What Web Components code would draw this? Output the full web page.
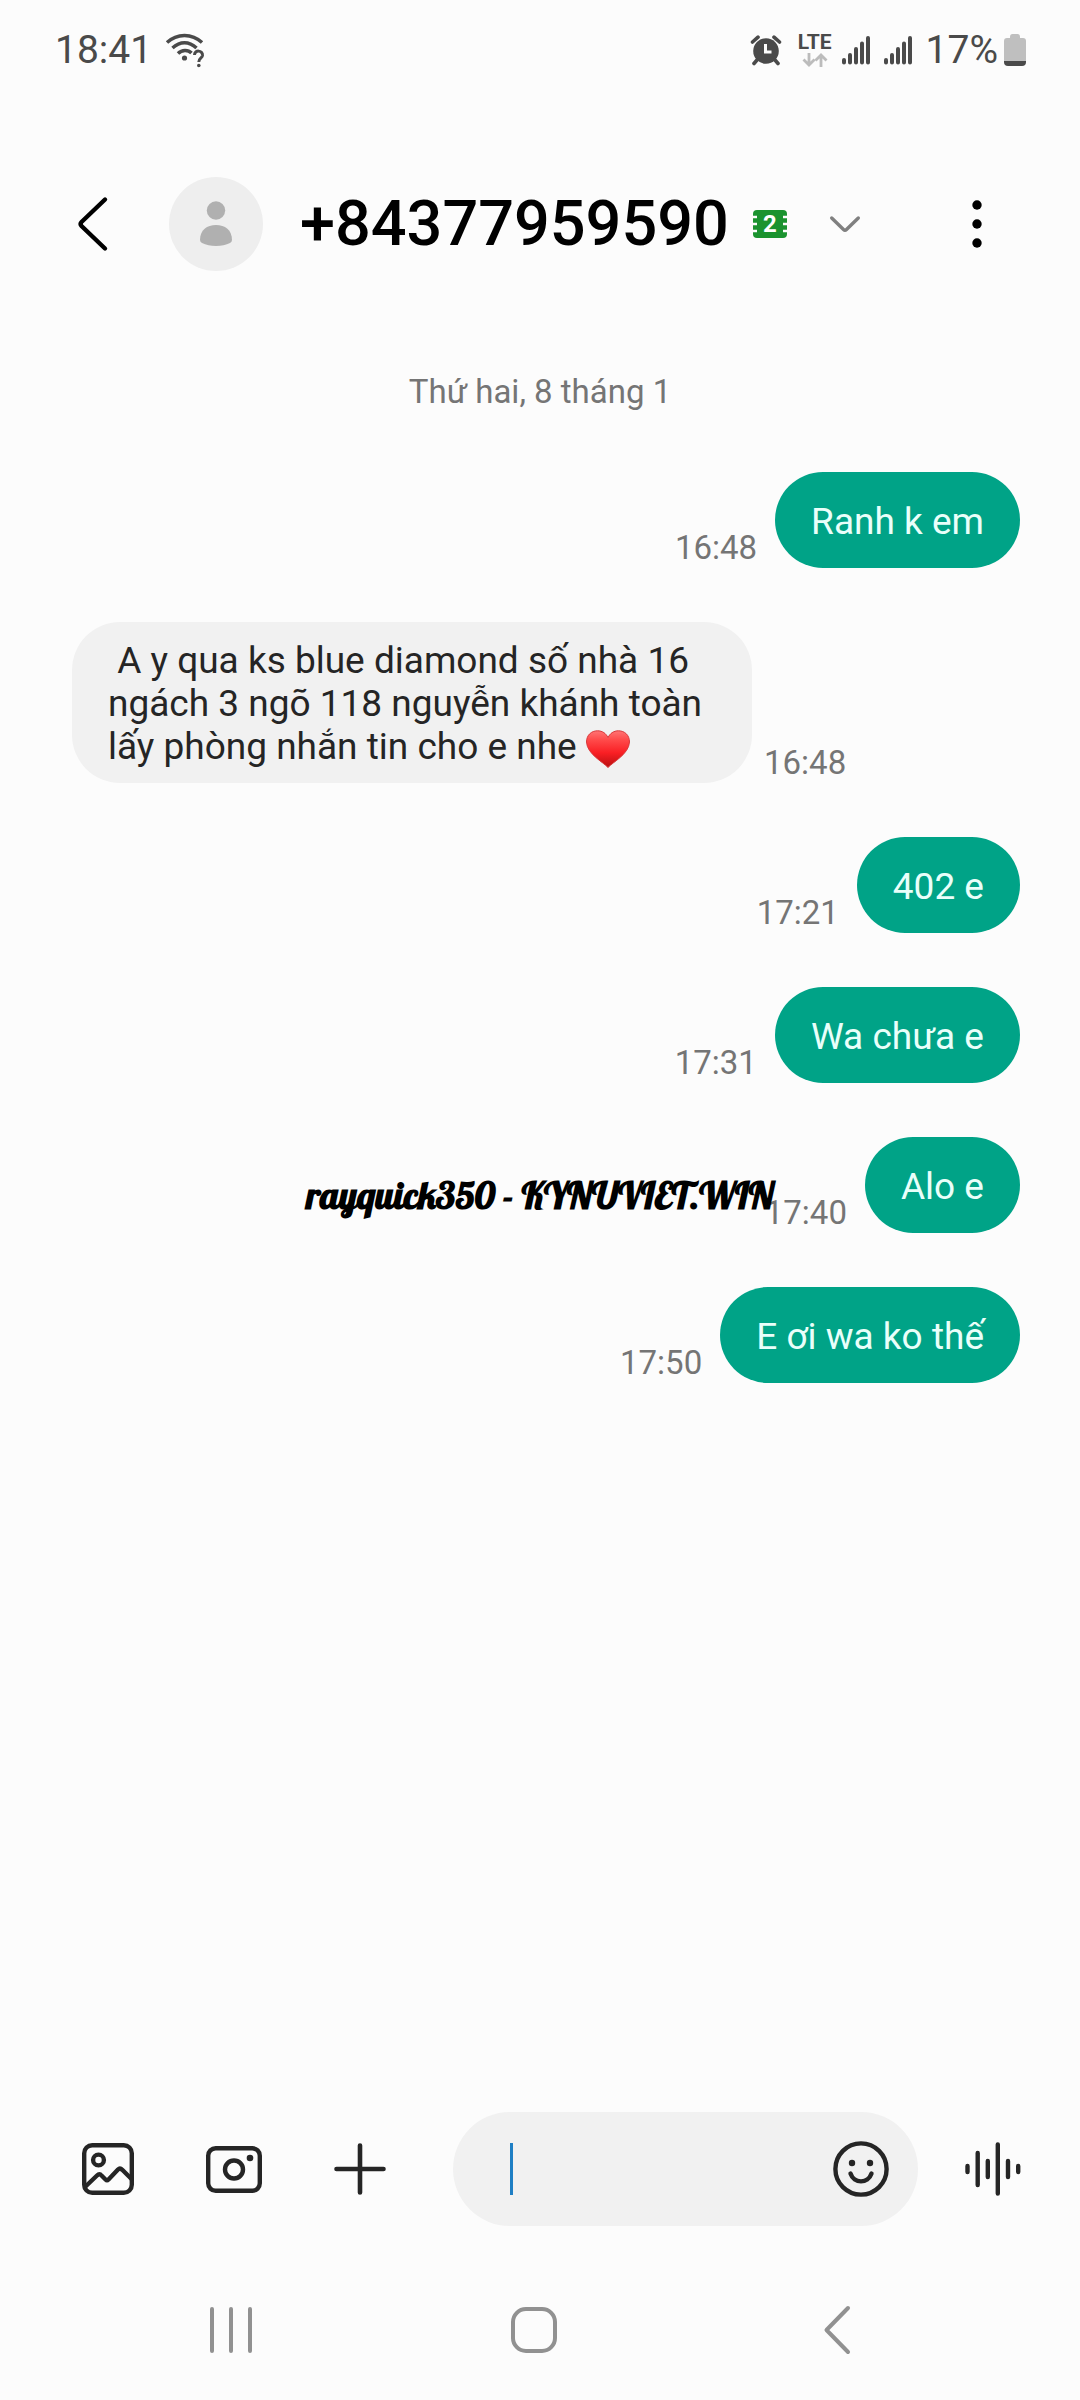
<!DOCTYPE html>
<html lang="vi">
<head>
<meta charset="utf-8">
<meta name="viewport" content="width=device-width, initial-scale=1">
<title>+84377959590</title>
<style>
  body { margin: 0; background: #fcfcfc; font-family: Roboto, "Noto Sans", sans-serif; }
</style>
</head>
<body>
<message-screen>
  <status-bar slot="status" time="18:41" battery="17%"></status-bar>
  <chat-header slot="header" sim="2">+84377959590</chat-header>
  <chat-message time="16:48" sent>Ranh k em</chat-message>
  <chat-message time="16:48">&nbsp;A y qua ks blue diamond số nhà 16 ngách 3 ngõ 118 nguyễn khánh toàn lấy phòng nhắn tin cho e nhe <heart-emoji></heart-emoji></chat-message>
  <chat-message time="17:21" sent>402 e</chat-message>
  <chat-message time="17:31" sent>Wa chưa e</chat-message>
  <chat-message time="17:40" sent>Alo e</chat-message>
  <chat-message time="17:50" sent>E ơi wa ko thế</chat-message>
  <message-composer slot="composer"></message-composer>
  <nav-bar slot="nav"></nav-bar>
  <water-mark slot="mark">rayquick350 - KYNUVIET.WIN</water-mark>
</message-screen>

<script>
const BASE = `
  *, *::before, *::after { box-sizing: border-box; }
  svg { display: block; flex: none; overflow: visible; }
  button { appearance: none; border: 0; padding: 0; margin: 0; background: none; color: inherit; font: inherit;
           display: flex; align-items: center; justify-content: center; flex: none; }
`;

function define(name, render) {
  customElements.define(name, class extends HTMLElement {
    constructor() {
      super();
      this.attachShadow({ mode: "open" });
    }
    connectedCallback() {
      this.shadowRoot.innerHTML = `<style>${BASE}</style>` + render(this);
    }
  });
}

define("message-screen", () => `
  <style>
    :host { display: flex; flex-direction: column; min-height: 100vh; position: relative; }
    main { flex: 1; display: flex; flex-direction: column; gap: 54px; padding: 24px 60px 54px 72px; }
    .date { text-align: center; font-size: 33px; line-height: 40px; color: #757575; margin: 0 0 6px -12px; }
  </style>
  <slot name="status"></slot>
  <slot name="header"></slot>
  <main><p class="date">Thứ hai, 8 tháng 1</p><slot></slot></main>
  <slot name="composer"></slot>
  <slot name="nav"></slot>
  <slot name="mark"></slot>
`);

const SIGNAL = `<svg width="28" height="30" viewBox="0 0 28 30" stroke="#4a4a4a" stroke-width="4" stroke-linecap="round" aria-hidden="true">
  <path d="M2 25v2.500M8 20v7.500M14 14v13.500M20 8.500v19M26 3v24.500"/></svg>`;

define("status-bar", el => `
  <style>
    :host { display: flex; align-items: center; height: 100px; padding: 0 54px 0 55px; color: #4a4a4a; font-size: 39px; line-height: 46px; }
    .left { display: flex; align-items: center; gap: 14px; flex: 1; }
    .right { display: flex; align-items: center; gap: 14px; }
    .net { display: flex; flex-direction: column; align-items: center; gap: 3px; margin: 0 -4px 0 3px; }
    .net b { font-size: 21px; line-height: 16px; font-weight: 700; }
    .level { display: flex; align-items: center; gap: 6px; }
  </style>
  <div class="left"><span>${el.getAttribute("time")}</span>
    <svg width="38" height="36" viewBox="0 0 38 36" fill="none" stroke="#4a4a4a" stroke-width="3.500" aria-hidden="true">
      <path d="M1 10.500C11 1 26 1 36 10.500M6.500 16C14 9 23 9 30.500 16M12 21.500C16 17.500 22 17.500 25.500 21"/>
      <circle cx="18.500" cy="26" r="2.600" fill="#4a4a4a" stroke="none"/>
      <path d="M28.500 23C28.500 17.500 37 18 36.500 23.500C36 26.500 32.800 26 32.800 30" stroke-width="3"/>
      <circle cx="32.800" cy="33.500" r="1.800" fill="#4a4a4a" stroke="none"/>
    </svg>
  </div>
  <div class="right">
    <svg width="30" height="30" viewBox="0 0 30 30" fill="none" aria-hidden="true">
      <circle cx="15" cy="16" r="12.800" fill="#4a4a4a"/>
      <path d="M1.500 7L7 2.200M28.500 7L23 2.200M6 25l-3 3.500M24 25l3 3.500" stroke="#4a4a4a" stroke-width="3.600" stroke-linecap="round"/>
      <path d="M14.500 9v8h6" stroke="#fcfcfc" stroke-width="3"/>
    </svg>
    <div class="net"><b>LTE</b>
      <svg width="28" height="14" viewBox="0 0 28 14" fill="none" stroke="#bcbcbc" stroke-width="2.800" aria-hidden="true">
        <path d="M8 0v12M2.500 6.500l5.500 5.500 5.500-5.500M20 14V2M14.500 7.500L20 2l5.500 5.500"/></svg>
    </div>
    ${SIGNAL}${SIGNAL}
    <div class="level"><span>${el.getAttribute("battery")}</span>
      <svg width="22" height="32" viewBox="0 0 22 32" aria-hidden="true">
        <path d="M6 3Q6 0 8.500 0h5Q16 0 16 3v1h3q3 0 3 3v20H0V7q0-3 3-3h3z" fill="#bfbfbf"/>
        <path d="M0 27h22v1q0 4-4 4H4q-4 0-4-4z" fill="#4a4a4a"/></svg>
    </div>
  </div>
`);

define("chat-header", el => `
  <style>
    :host { display: flex; align-items: center; height: 248px; padding: 0 64px; color: #000; }
    .back { width: 57px; height: 80px; }
    .avatar { display: flex; width: 94px; height: 94px; margin: 0 37px 0 48px; border-radius: 50%; background: #eee; align-items: center; justify-content: center; flex: none; }
    h1 { margin: 0; font-size: 63px; line-height: 74px; font-weight: 500; white-space: nowrap; }
    .sim { margin: 0 28px 0 24px; }
    .sim text { font: 700 24px Roboto, sans-serif; }
    .expand { width: 60px; height: 60px; }
    .more { width: 80px; height: 80px; margin: 0 -1px 0 auto; }
  </style>
  <button class="back" type="button" aria-label="Quay lại">
    <svg width="30" height="54" viewBox="0 0 30 54" fill="none" stroke="#000" stroke-width="4.400" stroke-linecap="round"><path d="M27 2.500L3.500 25Q1.500 27 3.500 29L27 51.500"/></svg>
  </button>
  <div class="avatar">
    <svg width="32" height="46" viewBox="0 0 32 46" fill="#b0b0b0" aria-hidden="true"><circle cx="16" cy="9.500" r="9.200"/><path d="M0 39C0 29 7 24 16 24s16 5 16 15q0 2-2 3-6 3-14 3T2 42q-2-1-2-3z"/></svg>
  </div>
  <h1><slot></slot></h1>
  <svg class="sim" width="34" height="28" viewBox="0 0 34 28" role="img" aria-label="SIM">
    <rect width="34" height="28" rx="4" fill="#1b932f"/>
    <path d="M0 7h4M0 14h4M0 21h4M30 7h4M30 14h4M30 21h4" stroke="#fcfcfc" stroke-width="2.400"/>
    <text x="17" y="22" text-anchor="middle" fill="#fff">${el.getAttribute("sim")}</text>
  </svg>
  <button class="expand" type="button" aria-label="Mở rộng">
    <svg width="30" height="17" viewBox="0 0 30 17" fill="none" stroke="#808080" stroke-width="3.400" stroke-linecap="round"><path d="M1.700 2L13.500 13.500q1.500 1.500 3 0L28.300 2"/></svg>
  </button>
  <button class="more" type="button" aria-label="Tùy chọn khác">
    <svg width="10" height="48" viewBox="0 0 10 48"><circle cx="5" cy="5" r="4.700"/><circle cx="5" cy="24" r="4.700"/><circle cx="5" cy="43" r="4.700"/></svg>
  </button>
`);

define("chat-message", el => `
  <style>
    :host { display: flex; align-items: flex-end; gap: 12px; }
    :host([sent]) { flex-direction: row-reverse; gap: 18px; }
    .bubble { display: flex; align-items: center; max-width: 680px; min-height: 96px; padding: 17px 36px 15px; border-radius: 48px;
              background: #f1f1f1; color: #252525; font-size: 37px; line-height: 43px; }
    :host([sent]) .bubble { background: #00a387; color: #e9fffa; }
    p { margin: 0; }
    time { font-size: 33px; line-height: 40px; color: #757575; }
  </style>
  <div class="bubble"><p><slot></slot></p></div>
  <time>${el.getAttribute("time")}</time>
`);

define("heart-emoji", () => `
  <style>:host { display: inline-block; vertical-align: middle; } svg { width: 44px; height: 38px; }</style>
  <svg viewBox="0 0 44 38" role="img" aria-label="❤">
    <defs><linearGradient id="g" x1="0" y1="0" x2="0" y2="1"><stop offset="0" stop-color="#ff7474"/><stop offset=".25" stop-color="#ff4a4a"/><stop offset=".6" stop-color="#f91f24"/><stop offset="1" stop-color="#b80f10"/></linearGradient></defs>
    <path d="M22 37.500C17 32 1 24 .5 12C.5 5 5.500.8 11.500.8C16.500.8 20 3.500 22 7.500C24 3.500 27.500.8 32.500.8C38.500.8 43.500 5 43.500 12C43 24 27 32 22 37.500z" fill="url(#g)" stroke="#d9383a" stroke-width="1"/>
  </svg>
`);

define("message-composer", () => `
  <style>
    :host { display: flex; align-items: center; padding: 0 43px 34px 64px; color: #252525; }
    .tools { display: flex; gap: 38px; margin-right: 49px; }
    button { width: 88px; height: 88px; }
    .field { flex: 1; min-width: 0; display: flex; align-items: center; height: 114px; border-radius: 57px; background: #f1f1f1; padding: 0 13px 0 57px; }
    .caret { width: 3px; height: 52px; background: #1f7fc4; flex: none; }
    input { flex: 1; min-width: 0; height: 80px; border: 0; outline: 0; padding: 0; background: none; color: inherit; font: 37px Roboto, sans-serif; }
    .voice { margin-left: 31px; }
    svg { fill: none; stroke: currentColor; stroke-linecap: round; }
    .dot { fill: currentColor; stroke: none; }
  </style>
  <div class="tools">
    <button type="button" aria-label="Thư viện">
      <svg width="52" height="52" viewBox="0 0 52 52" stroke-width="4.400"><rect x="2.200" y="2.200" width="47.600" height="47.600" rx="8"/><circle cx="16.500" cy="17" r="5.400"/><path d="M3 44L15 32.500q2.500-2.500 4.500 0l4 4q1.500 1.500 3 0L36 26.500q2-2 4.500.5L49.500 36" stroke-linejoin="round"/></svg>
    </button>
    <button type="button" aria-label="Máy ảnh">
      <svg width="56" height="47" viewBox="0 0 56 47" stroke-width="4.400"><rect x="2.200" y="2.200" width="51.600" height="42.600" rx="7.500"/><circle cx="28" cy="23.500" r="9"/><circle class="dot" cx="44" cy="12" r="3.300"/></svg>
    </button>
    <button type="button" aria-label="Thêm">
      <svg width="52" height="52" viewBox="0 0 52 52" stroke-width="4.600"><path d="M26 2.500v47M2.500 26h47"/></svg>
    </button>
  </div>
  <div class="field">
    <span class="caret"></span>
    <input type="text" aria-label="Tin nhắn">
    <button type="button" aria-label="Biểu tượng cảm xúc">
      <svg width="56" height="56" viewBox="0 0 56 56" stroke-width="4.400"><circle cx="28" cy="28" r="25.600"/><circle class="dot" cx="19" cy="22" r="3.200"/><circle class="dot" cx="37" cy="22" r="3.200"/><path d="M17.500 32.500C21 43 35 43 38.500 32.500"/></svg>
    </button>
  </div>
  <button class="voice" type="button" aria-label="Tin nhắn thoại">
    <svg width="56" height="54" viewBox="0 0 56 54" stroke-width="4.400"><path d="M2.500 24v6M12.700 11v32M22.800 19v16M32.800 2.500v49M43 19v16M53.200 24v6"/></svg>
  </button>
`);

define("nav-bar", () => `
  <style>
    :host { display: flex; align-items: center; justify-content: center; gap: 181px; height: 140px; padding-right: 12px; }
    button { width: 122px; height: 100px; }
    svg { fill: none; stroke: #919191; stroke-width: 4; stroke-linecap: round; stroke-linejoin: round; }
  </style>
  <button type="button" aria-label="Gần đây"><svg width="44" height="46" viewBox="0 0 44 46"><path d="M3 2v42M22 2v42M41 2v42"/></svg></button>
  <button type="button" aria-label="Màn hình chính"><svg width="46" height="46" viewBox="0 0 46 46"><rect x="2" y="2" width="42" height="42" rx="13"/></svg></button>
  <button type="button" aria-label="Trở về"><svg width="26" height="48" viewBox="0 0 26 48"><path d="M24 2L2.500 24 24 46"/></svg></button>
`);

define("water-mark", () => `
  <style>
    :host { position: absolute; inset: 0 0 10px; display: flex; align-items: center; justify-content: center; pointer-events: none;
            font: 700 37px/46px Lobster, "Liberation Serif", serif; color: #000; }
  </style>
  <span><slot></slot></span>
`);
</script>
</body>
</html>
